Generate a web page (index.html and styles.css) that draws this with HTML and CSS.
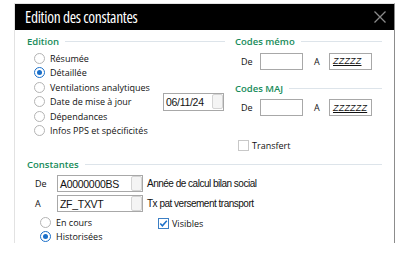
FILE: index.html
```html
<!DOCTYPE html>
<html lang="fr">
<head>
    <meta charset="UTF-8">
    <title>Edition des constantes</title>
    <link rel="stylesheet" href="styles.css">
</head>
<body>
    <div class="window">
        <div class="titlebar">
            <span class="title">Edition des constantes</span>
            <svg class="close" width="12" height="12" viewBox="0 0 12 12">
                <path d="M0.5 0.5 L11.5 11.5 M11.5 0.5 L0.5 11.5" stroke="#8a8a8a" stroke-width="1.3" fill="none"/>
            </svg>
        </div>

        <div class="content">
            <div class="top">
                <section class="edition">
                    <div class="group-head">Edition</div>
                    <div class="radios">
                        <div class="radio"><span class="dot"></span>Résumée</div>
                        <div class="radio"><span class="dot on"></span>Détaillée</div>
                        <div class="radio"><span class="dot"></span>Ventilations analytiques</div>
                        <div class="radio">
                            <span class="dot"></span>Date de mise à jour
                            <div class="field date"><span class="value">06/11/24</span><span class="pick"></span></div>
                        </div>
                        <div class="radio"><span class="dot"></span>Dépendances</div>
                        <div class="radio"><span class="dot"></span>Infos PPS et spécificités</div>
                    </div>
                </section>

                <section class="codes">
                    <div class="group-head">Codes mémo</div>
                    <div class="range">
                        <span class="lbl-de">De</span>
                        <div class="field small"></div>
                        <span class="lbl-a">A</span>
                        <div class="field small"><span class="zz">ZZZZZ</span></div>
                    </div>
                    <div class="group-head maj">Codes MAJ</div>
                    <div class="range">
                        <span class="lbl-de">De</span>
                        <div class="field small"></div>
                        <span class="lbl-a">A</span>
                        <div class="field small"><span class="zz">ZZZZZZ</span></div>
                    </div>
                    <div class="check transfert"><span class="box"></span>Transfert</div>
                </section>
            </div>

            <section class="constantes">
                <div class="group-head">Constantes</div>
                <div class="const-row">
                    <span class="const-lbl">De</span>
                    <div class="field code"><span class="value">A0000000BS</span><span class="pick"></span></div>
                    <span class="desc">Année de calcul bilan social</span>
                </div>
                <div class="const-row">
                    <span class="const-lbl">A</span>
                    <div class="field code"><span class="value">ZF_TXVT</span><span class="pick"></span></div>
                    <span class="desc">Tx pat versement transport</span>
                </div>
                <div class="bottom">
                    <div class="radios">
                        <div class="radio"><span class="dot"></span>En cours</div>
                        <div class="radio"><span class="dot on"></span>Historisées</div>
                    </div>
                    <div class="check visibles">
                        <svg class="box-on" width="11" height="11" viewBox="0 0 11 11">
                            <rect x="0.5" y="0.5" width="10" height="10" fill="#fff" stroke="#3c7fc4"/>
                            <path d="M2.3 5.6 L4.4 7.8 L8.8 2.8" stroke="#1a6fc9" stroke-width="1.5" fill="none"/>
                        </svg>
                        Visibles
                    </div>
                </div>
            </section>
        </div>
    </div>
</body>
</html>
```

FILE: styles.css
```css
body {
    margin: 0;
    background-color: #fff;
    font-family: "Open Sans", "Noto Sans", sans-serif;
    font-size: 9px;
    color: #111;
}
.window {
    margin: 3px 0 0 14px;
    width: 379px;
    height: 239px;
    border-top: 1px solid #e2e2e2;
    border-left: 1px solid #e2e2e2;
    border-right: 1px solid #8c8c8c;
    overflow: hidden;
}
.titlebar {
    height: 26px;
    background-color: #000;
    display: flex;
    align-items: center;
    justify-content: space-between;
    padding: 0 8px 0 10px;
}
.title {
    color: #fff;
    font-size: 15.5px;
    font-stretch: 85%;
    letter-spacing: -0.3px;
}
.close {
    display: block;
}
.content {
    padding: 0 12px 0 12px;
}
.top {
    height: 127px;
    padding-top: 4px;
    box-sizing: border-box;
    display: flex;
    gap: 10px;
}
.edition {
    width: 198px;
}
.codes {
    flex: 1;
}
.group-head {
    height: 14px;
    display: flex;
    align-items: center;
    gap: 6px;
    color: #178c5a;
    font-weight: 600;
    font-size: 9.5px;
}
.group-head::after {
    content: "";
    flex: 1;
    height: 1px;
    background-color: #dde4ea;
}
.radios {
    margin-top: 2.75px;
    padding-left: 7px;
}
.radio {
    height: 14.5px;
    display: flex;
    align-items: center;
    font-weight: 500;
}
.dot {
    width: 9px;
    height: 9px;
    border: 1px solid #b4b4b4;
    border-radius: 50%;
    background-color: #fff;
    margin-right: 5px;
    flex-shrink: 0;
    position: relative;
}
.dot.on {
    border-color: #1a6fc9;
}
.dot.on::after {
    content: "";
    position: absolute;
    left: 2px;
    top: 2px;
    width: 5px;
    height: 5px;
    border-radius: 50%;
    background-color: #1a6fc9;
}
.field {
    height: 17px;
    box-sizing: border-box;
    border: 1px solid #a8a8a8;
    background-color: #fff;
    display: flex;
    align-items: center;
    font-family: "Liberation Sans", Arial, sans-serif;
    font-size: 10.5px;
    letter-spacing: -0.3px;
    color: #111;
}
.field .value {
    flex: 1;
    padding-left: 2px;
}
.pick {
    width: 11px;
    height: 15px;
    box-sizing: border-box;
    border: 1px solid #d4d4d4;
    border-radius: 2px;
    background-color: #f4f4f4;
}
.field.date {
    margin-left: auto;
    margin-right: 1px;
    width: 61px;
    height: 18px;
}
.range {
    height: 17px;
    display: flex;
    align-items: center;
    margin-top: 4.5px;
    font-weight: 500;
}
.lbl-de {
    margin-left: 6px;
    width: 19px;
}
.field.small {
    width: 43px;
}
.lbl-a {
    margin-left: 11px;
    width: 15px;
}
.zz {
    padding-left: 3px;
    font-style: italic;
    text-decoration: underline;
    font-size: 9px;
    letter-spacing: 0.2px;
}
.group-head.maj {
    margin-top: 11.5px;
}
.range + .group-head.maj + .range {
    margin-top: 4px;
}
.check {
    display: flex;
    align-items: center;
    height: 14px;
    font-weight: 500;
}
.box {
    width: 11px;
    height: 11px;
    box-sizing: border-box;
    border: 1px solid #c8c8c8;
    margin-right: 3px;
}
.transfert {
    margin-top: 22px;
    margin-left: 3px;
}
.const-row {
    height: 17px;
    display: flex;
    align-items: center;
    margin-top: 4px;
    font-weight: 500;
}
.const-row + .const-row {
    margin-top: 3px;
}
.const-lbl {
    width: 30px;
    padding-left: 8px;
    box-sizing: border-box;
}
.field.code {
    width: 86px;
}
.desc {
    margin-left: 4px;
    font-family: "Liberation Sans", Arial, sans-serif;
    font-size: 10px;
    letter-spacing: -0.5px;
    font-weight: 400;
}
.bottom {
    display: flex;
}
.bottom .radios {
    margin-top: 3px;
    padding-left: 13px;
    width: 118px;
}
.visibles {
    margin-top: 4px;
    height: 14px;
}
.box-on {
    margin-right: 3px;
}
```
